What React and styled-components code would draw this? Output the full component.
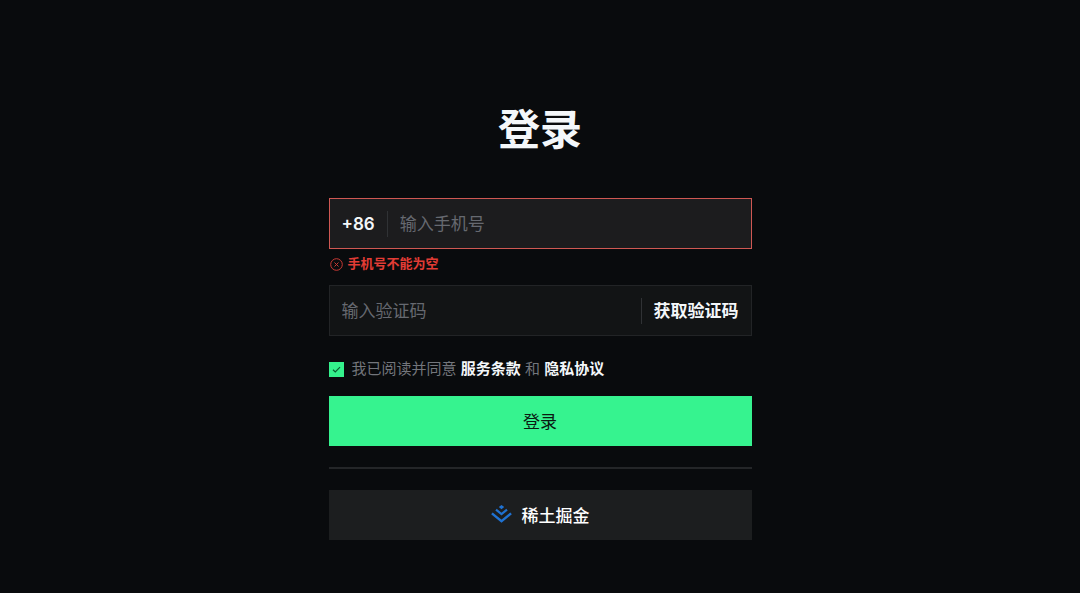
import React, { useState } from "react";
import styled, { createGlobalStyle } from "styled-components";

export default function App() {
    const [phone, setPhone] = useState("")
    const [code, setCode] = useState("")
    const [agreed, setAgreed] = useState(true)
    let phoneMissing = phone.trim() === ""

    function handleSubmit(e){
        e.preventDefault()
    }

    return (
    <Page>
        <GlobalStyle />
        <LoginForm onSubmit={handleSubmit} noValidate>
            <Title>登录</Title>

            <Field $invalid={phoneMissing}>
                <Prefix>+86</Prefix>
                <Separator />
                <TextInput
                    type="tel"
                    aria-label="手机号"
                    aria-invalid={phoneMissing}
                    aria-describedby="phone-error"
                    placeholder="输入手机号"
                    value={phone}
                    onChange={(e) => {setPhone(e.target.value)}}
                />
            </Field>
            <ErrorRow id="phone-error">
                {phoneMissing && <>
                    <ErrorIcon />
                    <ErrorText>手机号不能为空</ErrorText>
                </>}
            </ErrorRow>

            <Field>
                <TextInput
                    type="text"
                    aria-label="验证码"
                    placeholder="输入验证码"
                    value={code}
                    onChange={(e) => {setCode(e.target.value)}}
                />
                <Separator />
                <CodeButton type="button">获取验证码</CodeButton>
            </Field>

            <Agreement>
                <Checkbox
                    id="agree"
                    type="checkbox"
                    checked={agreed}
                    onChange={(e) => {setAgreed(e.target.checked)}}
                />
                <CheckMark />
                <AgreementText>
                    <label htmlFor="agree">我已阅读并同意</label>{" "}
                    <a href="#terms">服务条款</a> 和 <a href="#privacy">隐私协议</a>
                </AgreementText>
            </Agreement>

            <Button type="submit" $primary>登录</Button>
            <Divider />
            <Button type="button">
                <JuejinLogo />
                稀土掘金
            </Button>
        </LoginForm>
    </Page>
    );
}

function ErrorIcon() {
    return (
        <svg width="13" height="13" viewBox="0 0 13 13" fill="none" stroke="#c93a35" aria-hidden="true">
            <circle cx="6.5" cy="6.5" r="5.8" />
            <path d="M4.5 4.5l4 4M8.5 4.5l-4 4" />
        </svg>
    );
}

function CheckMark() {
    return (
        <CheckSvg viewBox="0 0 15 15" fill="none" stroke="#0b5a31" strokeWidth="1.2" aria-hidden="true">
            <path d="M4 7.8l2.3 2.2L11 5.2" />
        </CheckSvg>
    );
}

function JuejinLogo() {
    return (
        <svg width="21" height="18" viewBox="0 0 21 18" fill="none" aria-hidden="true">
            <path d="M10.5 0L13.2 2.1L10.5 4.3L7.8 2.1Z" fill="#1f72d2" />
            <path d="M5 4.6L10.5 9L16 4.6" stroke="#1f72d2" strokeWidth="2.2" />
            <path d="M0.9 8.4L10.5 16.1L20.1 8.4" stroke="#1f72d2" strokeWidth="2.4" />
        </svg>
    );
}

let GlobalStyle = createGlobalStyle`
  * { box-sizing: border-box; }

  body {
    margin: 0;
    background: #090b0d;
    color: #f4f7fa;
    font-family: Inter, "Noto Sans CJK SC", sans-serif;
    font-size: 17px;
  }

  button, input {
    font: inherit;
    color: inherit;
  }
`;

let Page = styled.main`
  min-height: 100vh;
  display: flex;
  justify-content: center;
  padding: 98px 20px 52px;
`;

let LoginForm = styled.form`
  width: 100%;
  max-width: 423px;
`;

let Title = styled.h1`
  margin: 0 0 36px;
  font-size: 42px;
  line-height: 64px;
  font-weight: 700;
  text-align: center;
`;

let Field = styled.div`
  display: flex;
  align-items: center;
  gap: 12px;
  height: 51px;
  padding: 0 12px;
  background: ${props => props.$invalid ? "#1c1c1e" : "#121415"};
  border: 1px solid ${props => props.$invalid ? "#cf5853" : "#222426"};
`;

let Prefix = styled.span`
  font-weight: 600;
`;

let Separator = styled.span`
  width: 1px;
  height: 26px;
  background: #303235;
`;

let TextInput = styled.input`
  flex: 1;
  min-width: 0;
  height: 100%;
  padding: 0;
  border: 0;
  outline: 0;
  background: transparent;

  &::placeholder {
    color: #666970;
    opacity: 1;
  }
`;

let CodeButton = styled.button`
  padding: 0 0 2px;
  border: 0;
  background: transparent;
  font-weight: 700;
  cursor: pointer;
`;

let ErrorRow = styled.div`
  display: flex;
  align-items: center;
  gap: 5px;
  height: 36px;
  padding: 0 0 6px 1px;
  color: #e23c35;
  font-size: 13px;
  font-weight: 700;
`;

let ErrorText = styled.span`
  padding-bottom: 3px;
`;

let Agreement = styled.div`
  position: relative;
  display: flex;
  align-items: center;
  gap: 8px;
  margin: 21px 0 15px;
  color: #73767c;
  font-size: 15px;
  line-height: 24px;
`;

let Checkbox = styled.input`
  appearance: none;
  width: 15px;
  height: 15px;
  margin: 0;
  border: 1px solid #34f28c;
  cursor: pointer;

  &:checked { background: #34f28c; }
`;

let CheckSvg = styled.svg`
  position: absolute;
  left: 0;
  width: 15px;
  height: 15px;
  pointer-events: none;

  ${Checkbox}:not(:checked) + & { display: none; }
`;

let AgreementText = styled.span`
  a {
    color: #f4f7fa;
    font-weight: 700;
    text-decoration: none;
  }
`;

let Button = styled.button`
  display: flex;
  align-items: center;
  justify-content: center;
  gap: 10px;
  width: 100%;
  height: 50px;
  padding: 0 0 2px;
  border: 0;
  background: ${props => props.$primary ? "#36f38f" : "#1c1e1f"};
  color: ${props => props.$primary ? "#0b1a12" : "#ffffff"};
  font-weight: ${props => props.$primary ? 400 : 500};
  cursor: pointer;
`;

let Divider = styled.hr`
  height: 2px;
  margin: 21px 0;
  border: 0;
  background: #242628;
`;
